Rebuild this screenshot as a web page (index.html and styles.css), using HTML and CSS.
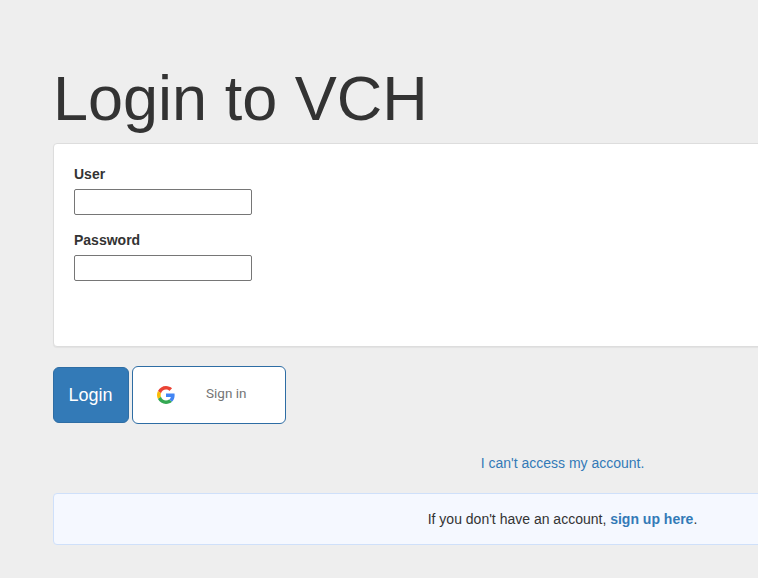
FILE: index.html
```html
<!DOCTYPE html>
<html lang="en">
<head>
  <meta charset="UTF-8">
  <meta name="viewport" content="width=device-width, initial-scale=1.0">
  <title>Login to VCH</title>
  <link rel="stylesheet" href="styles.css">
</head>
<body>
  <div class="container">
    <h1 class="title">Login to VCH</h1>
    <form class="panel">
      <div class="field">
        <label for="user">User</label>
        <input id="user" type="text">
      </div>
      <div class="field">
        <label for="password">Password</label>
        <input id="password" type="password">
      </div>
    </form>
    <div class="actions">
      <button class="login-btn" type="button">Login</button>
      <button class="google-btn" type="button">
        <svg class="google-icon" viewBox="0 0 48 48" width="18" height="18">
          <path fill="#EA4335" d="M24 9.5c3.54 0 6.71 1.22 9.21 3.6l6.85-6.85C35.9 2.38 30.47 0 24 0 14.62 0 6.51 5.38 2.56 13.22l7.98 6.19C12.43 13.72 17.74 9.5 24 9.5z"/>
          <path fill="#4285F4" d="M46.98 24.55c0-1.57-.15-3.09-.38-4.55H24v9.02h12.94c-.58 2.96-2.26 5.48-4.78 7.18l7.73 6c4.51-4.18 7.09-10.36 7.09-17.65z"/>
          <path fill="#FBBC05" d="M10.53 28.59c-.48-1.45-.76-2.99-.76-4.59s.27-3.14.76-4.59l-7.98-6.19C.92 16.46 0 20.12 0 24c0 3.88.92 7.54 2.56 10.78l7.97-6.19z"/>
          <path fill="#34A853" d="M24 48c6.48 0 11.93-2.13 15.89-5.81l-7.73-6c-2.15 1.45-4.92 2.3-8.16 2.3-6.26 0-11.57-4.22-13.47-9.91l-7.98 6.19C6.51 42.62 14.62 48 24 48z"/>
        </svg>
        <span class="google-label">Sign in</span>
      </button>
    </div>
    <p class="forgot"><a href="#">I can't access my account.</a></p>
    <div class="signup">If you don't have an account, <a href="#">sign up here</a>.</div>
  </div>
</body>
</html>
```

FILE: styles.css
```css
html, body {
  margin: 0;
  height: 100%;
  overflow: hidden;
}
body {
  background-color: #EEEEEE;
  color: #333333;
  font-family: "Liberation Sans", Arial, sans-serif;
  font-size: 14px;
  line-height: 20px;
}
a {
  color: #337AB7;
  text-decoration: none;
}
.container {
  width: 1019px;
  margin-left: 53px;
  padding-top: 63px;
}
.title {
  margin: 0 0 9px;
  font-size: 63px;
  font-weight: 400;
  line-height: 71px;
}
.panel {
  box-sizing: border-box;
  height: 204px;
  padding: 20px;
  background-color: #FFFFFF;
  border: 1px solid #DDDDDD;
  border-radius: 4px;
  box-shadow: 0 1px 1px rgba(0, 0, 0, 0.05);
}
.field {
  margin-bottom: 15px;
}
.field label {
  display: block;
  margin-bottom: 5px;
  font-weight: 700;
}
.field input {
  display: block;
  box-sizing: border-box;
  width: 178px;
  height: 26px;
  padding: 1px 2px;
  background-color: #FFFFFF;
  border: 1px solid #767676;
  border-radius: 2px;
}
.actions {
  display: flex;
  align-items: center;
  gap: 3px;
  margin-top: 19px;
}
.login-btn {
  width: 76px;
  height: 56px;
  padding: 0 1px 0 0;
  background-color: #337AB7;
  border: 1px solid #2E6DA4;
  border-radius: 6px;
  color: #FFFFFF;
  font-family: inherit;
  font-size: 18px;
}
.google-btn {
  display: flex;
  align-items: center;
  box-sizing: border-box;
  width: 154px;
  height: 58px;
  padding: 0 0 4px 24px;
  background-color: #FFFFFF;
  border: 1px solid #2E6DA4;
  border-radius: 6px;
  font-family: "Roboto", "Liberation Sans", sans-serif;
}
.google-icon {
  flex: none;
  margin-top: 4px;
}
.google-label {
  margin-left: 31px;
  color: #757575;
  font-size: 13.5px;
}
.forgot {
  margin: 29px 0 0;
  text-align: center;
}
.signup {
  box-sizing: border-box;
  height: 52px;
  margin-top: 20px;
  padding: 15px;
  background-color: #F5F8FF;
  border: 1px solid #CFE0FA;
  border-radius: 4px;
  text-align: center;
}
.signup a {
  font-weight: 700;
}
```
